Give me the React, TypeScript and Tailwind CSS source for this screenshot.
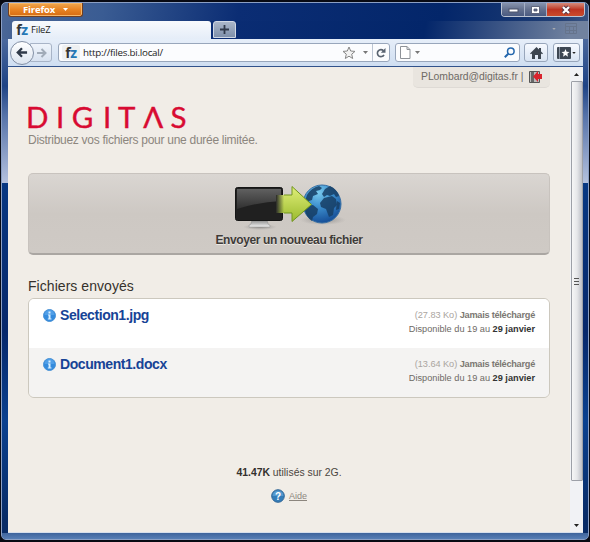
import React from "react";

const FzIcon = () => (
  <span className="inline-flex h-[15px] w-[14px] shrink-0 items-center justify-center font-['Open_Sans',sans-serif] text-[14px] font-bold leading-none tracking-[-0.5px] text-[#333]">
    f<span className="text-[#2577b5]">z</span>
  </span>
);

const Caret = ({ className = "" }: { className?: string }) => (
  <svg className={className} width="5" height="3" viewBox="0 0 5 3">
    <path d="M0 0h5L2.500 3z" fill="currentColor" />
  </svg>
);

function TitleBar() {
  return (
    <div className="flex h-[18px] shrink-0 items-start">
      <button className="ml-[6px] flex h-[14px] w-[75px] items-center justify-center gap-[8px] rounded-b-[3px] border border-t-0 border-[#713e20] bg-linear-to-b from-[#f0a84e] via-[#e88423] to-[#d66b12] font-['Open_Sans',sans-serif] text-[9.500px] font-bold leading-none tracking-[-0.150px] text-white shadow-[inset_0_0_0_1px_#f6b768]">
        Firefox <Caret />
      </button>
      <div className="ml-auto mr-[3px] flex h-[14px] overflow-hidden rounded-b-[4px] border border-t-0 border-[#bcc4d2]">
        <span className="flex w-[23px] items-center justify-center border-r border-[#a5b0c6] bg-linear-to-b from-[#8793ad] via-[#64718f] to-[#4b5b81]">
          <svg width="11" height="6"><rect x="1" y="2" width="9" height="3" fill="#fff" stroke="#4b526a" /></svg>
        </span>
        <span className="flex w-[22px] items-center justify-center border-r border-[#a5b0c6] bg-linear-to-b from-[#8793ad] via-[#64718f] to-[#4b5b81]">
          <svg width="11" height="10"><path d="M1.500 1.500h8v7h-8zM4 4h3v2H4z" fill="#fff" fillRule="evenodd" stroke="#4b526a" strokeWidth=".8" /></svg>
        </span>
        <span className="flex w-[37px] items-center justify-center bg-linear-to-b from-[#d58a7b] via-[#bd3422] to-[#cb4b2c]">
          <svg width="12" height="10" fill="none"><path d="M3 2l6 6M9 2L3 8" stroke="#543242" strokeWidth="4" /><path d="M3 2l6 6M9 2L3 8" stroke="#fff" strokeWidth="2.300" /></svg>
        </span>
      </div>
    </div>
  );
}

function TabBar() {
  return (
    <div className="flex h-[18px] items-start">
      <div className="ml-[4px] flex h-[18px] w-[199px] items-center gap-[2px] rounded-t-[3px] bg-linear-to-b from-[#f8fafd] to-[#e5edf8] pb-px pl-[3px] font-['Open_Sans',sans-serif] text-[9.500px] leading-none tracking-[-0.200px] text-[#222]">
        <FzIcon /> <span>FileZ</span>
      </div>
      <div className="ml-[2px] flex h-[17px] w-[23px] items-center justify-center rounded-t-[3px] border border-[#d0d8e5] bg-linear-to-b from-[#aab6c9] to-[#7f90ab]">
        <svg width="9" height="9"><path d="M4.500 0v9M0 4.500h9" stroke="#30394a" strokeWidth="1.800" /></svg>
      </div>
      <div className="ml-auto mr-[6px] mt-[2px] flex items-center gap-[9px] text-[#a9abb0]">
        <Caret className="h-[2px] w-[4px]" />
        <svg width="12" height="11" fill="none" stroke="#66748c">
          <path d="M.5.5h11v10H.5zM.5 3.500h11M4.500 3.500v7M8.500 3.500v7M.5 7.500h11" />
        </svg>
      </div>
    </div>
  );
}

function NavBar() {
  return (
    <div className="flex h-[28px] items-center border-b border-[#31528b] bg-linear-to-b from-[#e6eef9] to-[#cfdef1]">
      <div className="flex items-center pl-[2px]">
        <span className="relative z-10 flex h-[24px] w-[24px] items-center justify-center rounded-full border border-[#8390a5] bg-linear-to-b from-white to-[#dce4ef]">
          <svg width="12" height="11" viewBox="0 0 14 13" fill="none" stroke="#303a49" strokeWidth="2.700"><path d="M13 6.500H2.500M7 1.500l-5 5 5 5" /></svg>
        </span>
        <span className="-ml-[4px] flex h-[19px] w-[22px] items-center justify-center rounded-r-[3px] border border-[#a8b4c7] bg-linear-to-b from-[#eff4fb] to-[#d8e2f0]">
          <svg width="11" height="10" fill="none" stroke="#a1abb8" strokeWidth="2"><path d="M1 5h8M5.500 1l4 4-4 4" /></svg>
        </span>
      </div>
      <div className="ml-[6px] flex h-[19px] w-[332px] items-center rounded-[3px] border border-[#98a6bb] bg-[#fbfcfe]">
        <span className="ml-[3px] flex h-[15px] w-[18px] items-center justify-center rounded-[2px] bg-[#eef0f2]"><FzIcon /></span>
        <span className="ml-[3px] font-['Open_Sans',sans-serif] text-[9.800px] leading-none tracking-[-0.250px] text-[#222]">http://files.bi.local/</span>
        <svg className="ml-auto" width="14" height="14" viewBox="0 0 14 14"><path d="M7 1l1.700 4 4.300.4-3.300 2.800 1 4.300L7 10.200l-3.700 2.300 1-4.300L1 5.400 5.300 5z" fill="#f2f2f2" stroke="#868686" /></svg>
        <Caret className="ml-[7px] h-[3px] w-[5px] text-[#777]" />
        <span className="ml-[4px] flex h-full w-[17px] items-center justify-center border-l border-[#bcc5d2]">
          <svg width="10" height="10" fill="none"><path d="M8 6.800A3.500 3.500 0 1 1 7.500 2.800" stroke="#596370" strokeWidth="1.600" /><path d="M9.500 0v4.800H4.800z" fill="#596370" /></svg>
        </span>
      </div>
      <div className="ml-[5px] flex h-[19px] w-[125px] items-center rounded-[3px] border border-[#98a6bb] bg-[#fbfcfe] px-[4px]">
        <svg width="11" height="13" viewBox="0 0 11 13"><path d="M.5.5h6.500l3 3v9H.5zM7 .5v3h3" fill="#fff" stroke="#8e9298" /></svg>
        <Caret className="ml-[4px] h-[3px] w-[5px] text-[#777]" />
        <svg className="ml-auto" width="11" height="11" fill="none" stroke="#2467ad"><circle cx="6.800" cy="4.200" r="3.300" strokeWidth="1.500" /><path d="M4.300 6.700L.8 10.200" strokeWidth="2" /></svg>
      </div>
      <span className="ml-[4px] flex h-[19px] w-[24px] items-center justify-center rounded-[3px] border border-[#98a6bb] bg-linear-to-b from-[#f7faff] to-[#d9e4f3]">
        <svg width="13" height="12" viewBox="0 0 13 12"><path d="M0 6.500L6.500 0 9 2.500V1h2v3.500l2 2-1 .8-1-.8V12H8V8H5v4H2V6.500l-1 .8z" fill="#3c4550" /></svg>
      </span>
      <span className="ml-[5px] flex h-[19px] w-[27px] items-center justify-center gap-px rounded-[3px] border border-[#98a6bb] bg-linear-to-b from-[#f7faff] to-[#d9e4f3]">
        <svg width="14" height="12" viewBox="0 0 14 12"><rect width="14" height="12" rx="1" fill="#3d4753" /><path d="M2.500 0v12" stroke="#8a94a1" /><path d="M8.500 2l1.100 2.700 2.900.2-2.200 1.900.7 2.900-2.500-1.600L6 9.700l.7-2.900-2.200-1.900 2.900-.2z" fill="#fff" /></svg>
        <Caret className="h-[2px] w-[4px] text-[#222]" />
      </span>
    </div>
  );
}

function TransferArt() {
  return (
    <svg className="ml-[2px] shrink-0" width="112" height="50" viewBox="0 0 112 50">
      <defs>
        <linearGradient id="screen" x2="0" y2="1"><stop stopColor="#606060" /><stop offset="1" stopColor="#303030" /></linearGradient>
        <linearGradient id="stand" x2="0" y2="1"><stop stopColor="#888" /><stop offset="1" stopColor="#f0f0f0" /></linearGradient>
        <linearGradient id="arrow" x2="0" y2="1"><stop stopColor="#e0ef79" /><stop offset="1" stopColor="#9aba2d" /></linearGradient>
        <linearGradient id="tail" x2="1" y2="0"><stop stopColor="#292929" /><stop offset="1" stopColor="#292929" stopOpacity="0" /></linearGradient>
        <radialGradient id="globe" cx=".4" cy=".2" r=".8"><stop stopColor="#7bcbee" /><stop offset=".45" stopColor="#3e91cf" /><stop offset="1" stopColor="#164f98" /></radialGradient>
        <radialGradient id="shade"><stop stopColor="#555" stopOpacity=".5" /><stop offset="1" stopColor="#777" stopOpacity="0" /></radialGradient>
      </defs>
      <ellipse cx="26" cy="44" rx="17" ry="3" fill="url(#shade)" />
      <path d="M18 37h15l1 4q3 1 2 3H15q-1-2 2-3z" fill="url(#stand)" stroke="#8b8b8b" strokeWidth=".5" />
      <rect x="1.500" y="4.500" width="47" height="33" rx="2" fill="#202020" stroke="#151515" />
      <path d="M3 6h44v12Q25 19 3 26z" fill="url(#screen)" />
      <ellipse cx="89" cy="37" rx="23" ry="5" fill="url(#shade)" />
      <circle cx="88" cy="21" r="19" fill="url(#globe)" stroke="#356da3" />
      <g fill="#173f66" opacity=".86">
        <path d="M73 12q4-7 12-9l3 2-2 2-4 1 2 3-5 2-1 4-3 1-2 4-3-1z" />
        <path d="M72 23l7-1 5 4-1 5-4 3-1 4q-6-4-7-11z" />
        <path d="M91 6l5-3q7 3 9 10l-3 1-2-3-4 2-3-1-3 2-2-3z" />
        <path d="M90 15l8-2 4 3 1 6-3 3-1 7-4 2-3-8-5-2-1-4z" />
        <path d="M103 18l3 2-1 6-3 1z" />
      </g>
      <path d="M42 12h16V3.500L77.500 21.500 58 38.500V30H42z" fill="url(#arrow)" />
      <path d="M42 12h8v18h-8z" fill="url(#tail)" />
      <path d="M50 12h8V3.500L77.500 21.500 58 38.500V30h-8" fill="none" stroke="#71951e" />
    </svg>
  );
}

function FileRow({ name, size, shaded }: { name: string; size: string; shaded?: boolean }) {
  return (
    <li className={`flex h-[49px] justify-between pl-[14px] pr-[14px] ${shaded ? "bg-[#f4f3f2]" : "bg-white"}`}>
      <div className="flex h-[32px] items-center gap-[4px]">
        <svg width="13" height="13" viewBox="0 0 13 13"><circle cx="6.500" cy="6.500" r="6" fill="#348bdd" stroke="#4a92d5" /><path d="M1.500 6a5 5 0 0 1 10 0z" fill="#5ca8ec" opacity=".7" /><path d="M5.500 2.500h2v2h-2zM5 5.500h2.500v4h1v1H4.800v-1h.8v-3H5z" fill="#d9efff" /></svg>
        <a className="text-[14px] font-bold leading-none tracking-[-0.430px] text-[#174396]">{name}</a>
      </div>
      <div className="pt-[9px] text-right text-[9.200px] leading-[14px] text-[#6e6a65]">
        <p><span className="tracking-[-0.050px] text-[#aaa5a0]">({size} Ko)</span> <b className="font-bold tracking-[-0.260px] text-[#7c7873]">Jamais téléchargé</b></p>
        <p>Disponible du 19 au <b className="text-[#333]">29 janvier</b></p>
      </div>
    </li>
  );
}

function Page() {
  return (
    <main className="flex w-[562px] shrink-0 flex-col bg-[#f1ede7] pl-[20px] pr-[20px]">
      <div className="flex h-[21px] w-[137px] shrink-0 items-center self-end rounded-b-[5px] border-b border-[#dedad5] bg-[#e9e5df] pl-[8px] text-[10.400px] tracking-[-0.050px] text-[#6e6a65]">
        <span>PLombard@digitas.fr |</span>
        <svg className="ml-[6px]" width="14" height="12" viewBox="0 0 14 12"><path d="M.5.500h10v11H.500z" fill="#bbb" stroke="#555" /><path d="M2 1h3v10H2z" fill="#686868" /><path d="M13 3H9V0L4 5.500 9 11V8h4z" fill="#d9232d" /></svg>
      </div>
      <svg className="mt-[15px] shrink-0 overflow-visible" width="162" height="28" viewBox="0 0 162 28">
        <text y="24.500" x="-2 28 43.800 75 90 115.200 142.500" fill="#d80b32" stroke="#d80b32" strokeWidth=".4" className="font-['Lato',sans-serif] text-[29.500px]">DIGITΛS</text>
      </svg>
      <p className="mt-px text-[12px] leading-[16px] tracking-[-0.280px] text-[#8c867e]">Distribuez vos fichiers pour une durée limitée.</p>
      <button className="mt-[25px] flex h-[82px] w-full shrink-0 flex-col items-center rounded-[5px] border border-b-2 border-[#c8c3be] border-b-[#aaa6a2] bg-linear-to-b from-[#dad6d2] via-[#cdc8c3] to-[#cfcac5] pt-[9px]">
        <TransferArt />
        <span className="text-[12px] font-bold leading-[14px] tracking-[-0.400px] text-[#3e3b38] [text-shadow:0_1px_0_#eeeae5]">Envoyer un nouveau fichier</span>
      </button>
      <h2 className="mt-[22px] text-[14px] leading-[18px] tracking-[0.050px] text-[#35312c]">Fichiers envoyés</h2>
      <ul className="mt-[3px] shrink-0 overflow-hidden rounded-[6px] border border-[#ccc8be]">
        <FileRow name="Selection1.jpg" size="27.83" />
        <FileRow name="Document1.docx" size="13.64" shaded />
      </ul>
      <p className="mt-[68px] text-center text-[10.400px] leading-[14px] text-[#4b4640]"><b className="text-[#34302c]">41.47K</b> utilisés sur 2G.</p>
      <div className="mt-[9px] flex items-center justify-center gap-[4px] text-[9px] text-[#8c867e]">
        <svg width="14" height="14" viewBox="0 0 14 14"><circle cx="7" cy="7" r="6.300" fill="#347db9" stroke="#336796" /><path d="M1.500 7a5.500 5.500 0 0 1 11 0z" fill="#6baee0" opacity=".6" /><text x="7" y="10.500" textAnchor="middle" fill="white" fontSize="10" fontWeight="bold">?</text></svg>
        <a className="pt-px underline">Aide</a>
      </div>
    </main>
  );
}

function ScrollBar() {
  return (
    <div className="flex w-[13px] flex-col items-center bg-[#f1f2f5]">
      <div className="flex h-[14px] shrink-0 items-center"><svg width="5" height="3"><path d="M0 3h5L2.500 0z" fill="#222" /></svg></div>
      <div className="flex h-[400px] w-[12px] shrink-0 items-center justify-center rounded-[1px] border border-[#9da0a8] bg-linear-to-r from-[#f6f6f7] via-[#e6e7ea] to-[#bdbfc7]">
        <svg width="5" height="7"><path d="M0 .5h5M0 3.500h5M0 6.500h5" stroke="#555" /></svg>
      </div>
      <div className="mt-auto flex h-[14px] items-center text-[#222]"><Caret /></div>
    </div>
  );
}

export default function App() {
  return (
    <div className="h-[542px] w-[590px] bg-[#080a13] pt-[2px] font-['Liberation_Sans',sans-serif]">
      <div className="ml-px flex h-[538px] w-[588px] flex-col overflow-hidden rounded-[5px] border border-[#8b9fc4] bg-[linear-gradient(100deg,#4b6797_0%,#3a5c93_15%,#0b2d74_35%,#03266a_65%,#203e74_82%,#71829f_97%)]">
        <TitleBar />
        <div className="flex min-h-0 grow bg-[linear-gradient(to_bottom,#5b76a6_0px,#1f4385_65px,#5673a9_95px,#b4c1de_162px,#073782_162px,#07286b_310px,#0a408f_400px,#082b66_500px)] pr-[5px] pl-[6px]">
          <div className="flex min-w-0 grow flex-col">
            <div className="-mr-[5px] -ml-[6px] bg-[linear-gradient(100deg,#4b6797_0%,#234884_15%,#0b2d74_35%,#03266a_72%,#71829f_97%)] pr-[5px] pl-[6px]">
              <TabBar />
            </div>
            <NavBar />
            <div className="flex min-h-0 grow border-b border-[#d7dfeb]"><Page /><ScrollBar /></div>
          </div>
        </div>
        <div className="h-[6px] shrink-0 bg-linear-to-b from-[#3e649c] to-[#587fb6]" />
      </div>
    </div>
  );
}
